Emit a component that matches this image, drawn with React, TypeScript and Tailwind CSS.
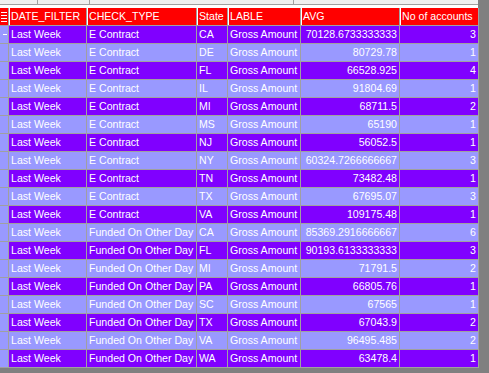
const HEADERS = ["DATE_FILTER", "CHECK_TYPE", "State", "LABLE", "AVG", "No of accounts"];

const ROWS: [string, string, string, string, string, string][] = [
  ["Last Week", "E Contract", "CA", "Gross Amount", "70128.6733333333", "3"],
  ["Last Week", "E Contract", "DE", "Gross Amount", "80729.78", "1"],
  ["Last Week", "E Contract", "FL", "Gross Amount", "66528.925", "4"],
  ["Last Week", "E Contract", "IL", "Gross Amount", "91804.69", "1"],
  ["Last Week", "E Contract", "MI", "Gross Amount", "68711.5", "2"],
  ["Last Week", "E Contract", "MS", "Gross Amount", "65190", "1"],
  ["Last Week", "E Contract", "NJ", "Gross Amount", "56052.5", "1"],
  ["Last Week", "E Contract", "NY", "Gross Amount", "60324.7266666667", "3"],
  ["Last Week", "E Contract", "TN", "Gross Amount", "73482.48", "1"],
  ["Last Week", "E Contract", "TX", "Gross Amount", "67695.07", "3"],
  ["Last Week", "E Contract", "VA", "Gross Amount", "109175.48", "1"],
  ["Last Week", "Funded On Other Day", "CA", "Gross Amount", "85369.2916666667", "6"],
  ["Last Week", "Funded On Other Day", "FL", "Gross Amount", "90193.6133333333", "3"],
  ["Last Week", "Funded On Other Day", "MI", "Gross Amount", "71791.5", "2"],
  ["Last Week", "Funded On Other Day", "PA", "Gross Amount", "66805.76", "1"],
  ["Last Week", "Funded On Other Day", "SC", "Gross Amount", "67565", "1"],
  ["Last Week", "Funded On Other Day", "TX", "Gross Amount", "67043.9", "2"],
  ["Last Week", "Funded On Other Day", "VA", "Gross Amount", "96495.485", "2"],
  ["Last Week", "Funded On Other Day", "WA", "Gross Amount", "63478.4", "1"],
];

export default function App() {
  return (
    <div
      className="w-[489px] h-[373px] bg-[#808080] overflow-hidden text-[10.6px] leading-none"
      style={{ fontFamily: '"Liberation Sans", Arial, sans-serif' }}
    >
      {/* toolbar remnant */}
      <div className="w-[478px] h-[8px] bg-white flex flex-col">
        <div className="h-[5px] bg-[#f0f0f0] border-b border-[#a0a0a0] flex">
          <div className="w-[38px] border-r border-[#a0a0a0]" />
          <div className="w-[52px] border-r border-[#a0a0a0]" />
          <div className="w-[204px] border-r border-[#a0a0a0]" />
        </div>
      </div>

      <div className="grid grid-cols-[8px_77px_109px_30px_72px_98px_78px] w-[479px] gap-px bg-[#a0a0a0] pb-px pr-px">
        {/* header */}
        <div className="h-[17px] bg-[#ff0000] flex flex-col justify-center gap-[2px] px-[1px]">
          <div className="h-px bg-white" />
          <div className="h-px bg-white" />
          <div className="h-px bg-white" />
          <div className="h-px bg-white" />
        </div>
        {HEADERS.map((h) => (
          <div
            key={h}
            className="h-[17px] bg-[#ff0000] text-white flex items-center pl-[1px] border-l border-white whitespace-nowrap overflow-hidden"
          >
            {h}
          </div>
        ))}

        {ROWS.map((r, i) => (
          <Row key={i} r={r} bg={i % 2 === 0 ? "bg-[#8000ff]" : "bg-[#9999ff]"} first={i === 0} />
        ))}
      </div>
    </div>
  );
}

function Row({ r, bg, first }: { r: string[]; bg: string; first: boolean }) {
  return (
    <>
      <div className="h-[17px] bg-[#9999ff] flex items-center">
        {first && <div className="w-[4px] h-px bg-white ml-[3px]" />}
      </div>
      {r.map((c, j) => (
        <div
          key={j}
          className={
            "h-[17px] text-white flex items-center whitespace-nowrap overflow-hidden " +
            bg +
            (j >= 4 ? " justify-end pr-[2px]" : " pl-[2px]")
          }
        >
          {c}
        </div>
      ))}
    </>
  );
}
